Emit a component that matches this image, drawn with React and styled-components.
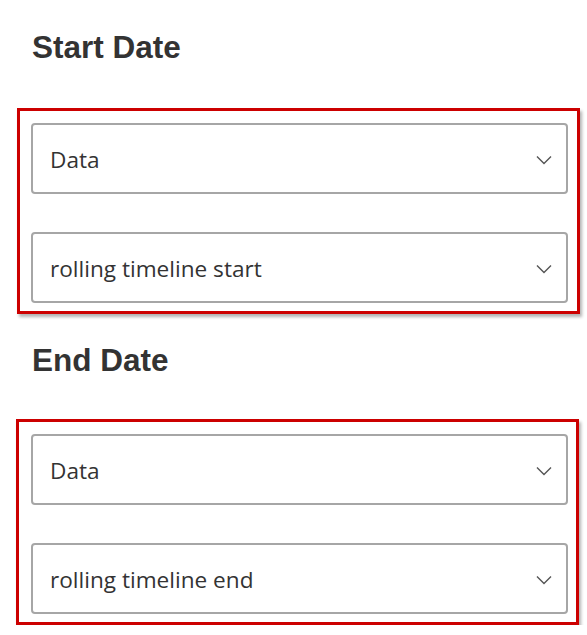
import React from 'react';
import styled, { createGlobalStyle } from 'styled-components';

const GlobalStyle = createGlobalStyle`
  html, body {
    margin: 0;
    padding: 0;
    background: #ffffff;
  }
`;

const Page = styled.div`
  width: 587px;
  padding: 27px 0 0 0;
  display: flex;
  flex-direction: column;
`;

const Title = styled.h2`
  margin: 0 0 ${(p) => p.$gap}px 32px;
  font-family: Arial, 'Liberation Sans', sans-serif;
  font-size: 31.5px;
  line-height: 40px;
  font-weight: bold;
  color: #333333;
`;

const Frame = styled.div`
  margin: 0 0 ${(p) => p.$after}px ${(p) => p.$left}px;
  width: 563px;
  box-sizing: border-box;
  border: 3px solid #cc0000;
  box-shadow: 2px 3px 3px rgba(0, 0, 0, 0.3);
  padding: 12px 8px 8px ${(p) => 28 - p.$left}px;
  display: flex;
  flex-direction: column;
  gap: 38px;
`;

const Select = styled.div`
  width: 537px;
  height: 71px;
  box-sizing: border-box;
  border: 2px solid #a6a6a6;
  border-radius: 4px;
  padding: 2px 14px 0 17px;
  display: flex;
  align-items: center;
  justify-content: space-between;
  font-family: 'Open Sans', 'Noto Sans', sans-serif;
  font-size: 22.6px;
  color: #333333;
`;

const Chevron = () => (
  <svg width="16" height="10" viewBox="0 0 16 10" fill="none">
    <path d="M1 1.5 L8 8.5 L15 1.5" stroke="#555" strokeWidth="1.4" />
  </svg>
);

const Dropdown = ({ label }) => (
  <Select>
    <span>{label}</span>
    <Chevron />
  </Select>
);

export default function App() {
  return (
    <>
      <GlobalStyle />
      <Page>
        <Title $gap={41}>Start Date</Title>
        <Frame $after={26} $left={17}>
          <Dropdown label="Data" />
          <Dropdown label="rolling timeline start" />
        </Frame>
        <Title $gap={39}>End Date</Title>
        <Frame $after={0} $left={16}>
          <Dropdown label="Data" />
          <Dropdown label="rolling timeline end" />
        </Frame>
      </Page>
    </>
  );
}
